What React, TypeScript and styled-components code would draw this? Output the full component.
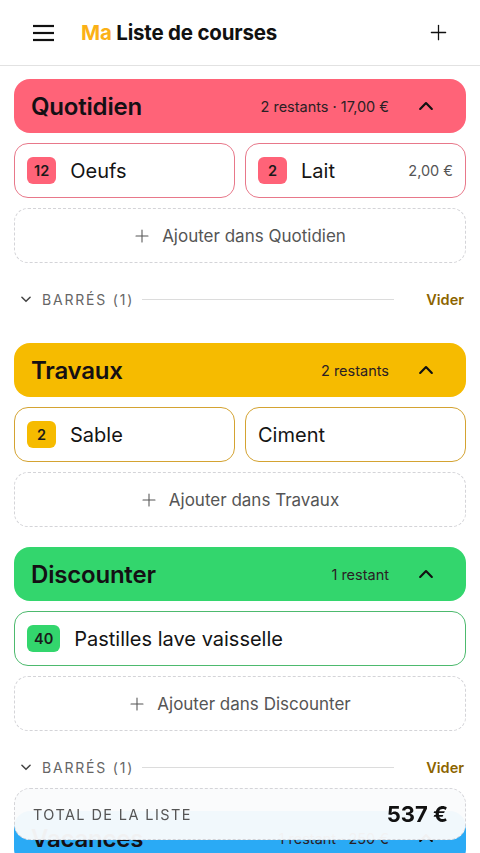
import React from 'react';
import styled, { createGlobalStyle } from 'styled-components';

type Item = { qty?: number; name: string; price?: string; full?: boolean };
type Section = {
    name: string;
    color: string;
    border: string;
    meta: string;
    items: Item[];
    struck?: number;
};

const sections: Section[] = [
    {
        name: 'Quotidien',
        color: '#ff6378',
        border: '#e8788a',
        meta: '2 restants · 17,00 €',
        items: [
            { qty: 12, name: 'Oeufs' },
            { qty: 2, name: 'Lait', price: '2,00 €' },
        ],
        struck: 1,
    },
    {
        name: 'Travaux',
        color: '#f6bb00',
        border: '#d4a332',
        meta: '2 restants',
        items: [{ qty: 2, name: 'Sable' }, { name: 'Ciment' }],
    },
    {
        name: 'Discounter',
        color: '#33d66d',
        border: '#4dba6e',
        meta: '1 restant',
        items: [{ qty: 40, name: 'Pastilles lave vaisselle', full: true }],
        struck: 1,
    },
    {
        name: 'Vacances',
        color: '#2aaaf5',
        border: '#5ab4ea',
        meta: '1 restant · 250 €',
        items: [{ qty: 1, name: 'Crème solaire' }],
    },
];

const GlobalStyle = createGlobalStyle`
    body {
        margin: 0;
        background: #ffffff;
        font-family: 'Inter', 'Noto Sans', sans-serif;
        color: #111;
    }
`;

const Page = styled.div`
    padding-bottom: 90px;
`;

const TopBar = styled.header`
    height: 66px;
    display: flex;
    align-items: center;
    padding: 0 32px 0 32px;
    border-bottom: 1px solid #e2e2e2;
    box-sizing: border-box;
`;

const IconButton = styled.button`
    border: none;
    background: none;
    padding: 0;
    display: flex;
    align-items: center;
    justify-content: center;
    cursor: pointer;
    color: #111;
`;

const AppTitle = styled.h1`
    margin: 0 0 0 26px;
    flex: 1;
    font-size: 20.5px;
    font-weight: 700;
    letter-spacing: -0.2px;

    span {
        color: #fbb116;
    }
`;

const List = styled.main`
    padding: 13px 14px 0;
    display: flex;
    flex-direction: column;
`;

const Block = styled.section`
    display: flex;
    flex-direction: column;
    gap: 10px;
    margin-bottom: 20px;
`;

const SectionHeader = styled.div<{ $color: string }>`
    height: 54px;
    border-radius: 16px;
    background: ${(p) => p.$color};
    display: flex;
    align-items: center;
    padding: 0 30px 0 17px;
`;

const SectionName = styled.h2`
    margin: 0;
    flex: 1;
    font-size: 24px;
    font-weight: 600;
    letter-spacing: -0.2px;
    color: #141014;
`;

const SectionMeta = styled.span`
    font-size: 14.5px;
    color: #2a2024;
    margin-right: 27px;
`;

const ItemGrid = styled.div`
    display: grid;
    grid-template-columns: 1fr 1fr;
    gap: 10px;
`;

const ItemCard = styled.div<{ $border: string; $full?: boolean }>`
    grid-column: ${(p) => (p.$full ? '1 / -1' : 'auto')};
    height: 55px;
    box-sizing: border-box;
    border: 1.5px solid ${(p) => p.$border};
    border-radius: 14px;
    display: flex;
    align-items: center;
    padding: 0 12px;
    gap: 14px;
    background: #fff;
`;

const Qty = styled.span<{ $color: string }>`
    min-width: 29px;
    height: 27px;
    padding: 0 7px;
    box-sizing: border-box;
    border-radius: 6px;
    background: ${(p) => p.$color};
    display: flex;
    align-items: center;
    justify-content: center;
    font-size: 14.5px;
    font-weight: 600;
    color: #1a1a1a;
`;

const ItemName = styled.span`
    flex: 1;
    font-size: 20px;
    color: #141414;
`;

const ItemPrice = styled.span`
    font-size: 14.5px;
    color: #555;
`;

const AddButton = styled.button`
    height: 55px;
    border: 1.5px dashed #d4d4d8;
    border-radius: 14px;
    background: #fff;
    display: flex;
    align-items: center;
    justify-content: center;
    gap: 12px;
    font-family: inherit;
    font-size: 17px;
    color: #555;
    cursor: pointer;
`;

const StruckRow = styled.div`
    height: 52px;
    display: flex;
    align-items: center;
    padding: 0 2px 0 5px;
    margin-bottom: -2px;
`;

const StruckLabel = styled.span`
    margin-left: 9px;
    font-size: 14px;
    letter-spacing: 1.8px;
    color: #666;
`;

const Rule = styled.div`
    flex: 1;
    height: 1px;
    background: #dcdcdc;
    margin: 0 32px 0 8px;
`;

const ClearLink = styled.button`
    border: none;
    background: none;
    padding: 0;
    font-family: inherit;
    font-size: 14.5px;
    font-weight: 600;
    color: #8c6400;
    cursor: pointer;
`;

const TotalBar = styled.div`
    position: fixed;
    left: 14px;
    right: 14px;
    bottom: 13px;
    height: 52px;
    box-sizing: border-box;
    border: 1.5px dashed #d4d4d8;
    border-radius: 16px;
    background: rgba(250, 251, 252, 0.96);
    display: flex;
    align-items: center;
    padding: 0 17px 0 18px;
`;

const TotalLabel = styled.span`
    flex: 1;
    font-size: 14.5px;
    letter-spacing: 1.4px;
    color: #555;
`;

const TotalValue = styled.span`
    font-size: 22px;
    font-weight: 700;
    color: #111;
`;

const Chevron = ({ size = 20 }: { size?: number }) => (
    <svg width={size} height={size} viewBox="0 0 24 24" fill="none" stroke="#111" strokeWidth={2.6} strokeLinecap="round" strokeLinejoin="round">
        <polyline points="5 15.5 12 8.5 19 15.5" />
    </svg>
);

const Plus = ({ size, color }: { size: number; color: string }) => (
    <svg width={size} height={size} viewBox="0 0 24 24" fill="none" stroke={color} strokeWidth={1.6} strokeLinecap="round">
        <line x1="12" y1="3" x2="12" y2="21" />
        <line x1="3" y1="12" x2="21" y2="12" />
    </svg>
);

export default function App() {
    return (
        <Page>
            <GlobalStyle />
            <TopBar>
                <IconButton aria-label="Menu">
                    <svg width="23" height="18" viewBox="0 0 23 18" stroke="#111" strokeWidth={2.2}>
                        <line x1="1" y1="2" x2="22" y2="2" />
                        <line x1="1" y1="9" x2="22" y2="9" />
                        <line x1="1" y1="16" x2="22" y2="16" />
                    </svg>
                </IconButton>
                <AppTitle>
                    <span>Ma</span> Liste de courses
                </AppTitle>
                <IconButton aria-label="Ajouter une liste">
                    <Plus size={19} color="#111" />
                </IconButton>
            </TopBar>

            <List>
                {sections.map((s) => (
                    <Block key={s.name}>
                        <SectionHeader $color={s.color}>
                            <SectionName>{s.name}</SectionName>
                            <SectionMeta>{s.meta}</SectionMeta>
                            <Chevron />
                        </SectionHeader>
                        <ItemGrid>
                            {s.items.map((it) => (
                                <ItemCard key={it.name} $border={s.border} $full={it.full}>
                                    {it.qty !== undefined && <Qty $color={s.color}>{it.qty}</Qty>}
                                    <ItemName>{it.name}</ItemName>
                                    {it.price && <ItemPrice>{it.price}</ItemPrice>}
                                </ItemCard>
                            ))}
                        </ItemGrid>
                        <AddButton>
                            <Plus size={16} color="#555" />
                            Ajouter dans {s.name}
                        </AddButton>
                        {s.struck !== undefined && (
                            <StruckRow>
                                <svg width="14" height="14" viewBox="0 0 24 24" fill="none" stroke="#444" strokeWidth={2.6} strokeLinecap="round" strokeLinejoin="round">
                                    <polyline points="5 9 12 16 19 9" />
                                </svg>
                                <StruckLabel>BARRÉS ({s.struck})</StruckLabel>
                                <Rule />
                                <ClearLink>Vider</ClearLink>
                            </StruckRow>
                        )}
                    </Block>
                ))}
            </List>

            <TotalBar>
                <TotalLabel>TOTAL DE LA LISTE</TotalLabel>
                <TotalValue>537 €</TotalValue>
            </TotalBar>
        </Page>
    );
}
